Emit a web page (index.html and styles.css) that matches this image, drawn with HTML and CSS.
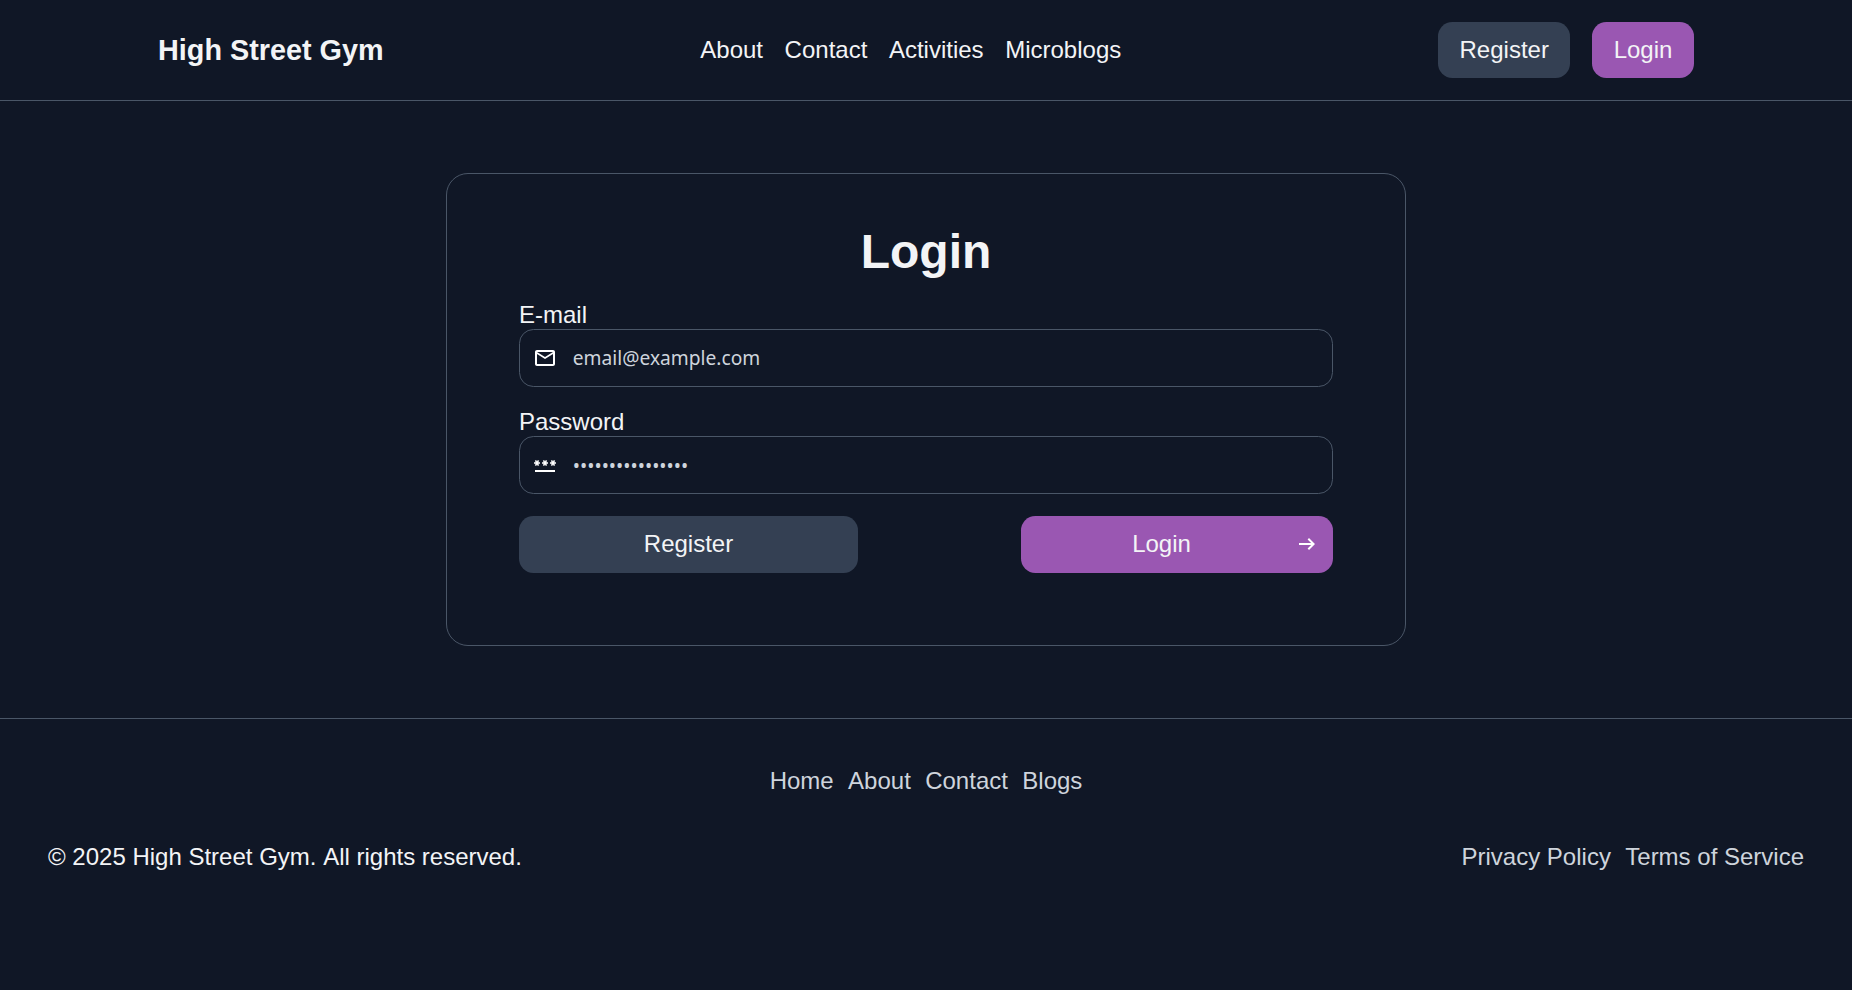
FILE: index.html
```html
<!DOCTYPE html>
<html lang="en">
<head>
<meta charset="utf-8">
<title>High Street Gym</title>
<link rel="stylesheet" href="styles.css">
</head>
<body>
<header class="header">
  <div class="brand">High Street Gym</div>
  <nav class="nav"><a>About</a><a>Contact</a><a>Activities</a><a>Microblogs</a></nav>
  <div class="actions"><a class="button">Register</a><a class="button primary">Login</a></div>
</header>
<main class="main">
  <form class="card">
    <h1 class="title">Login</h1>
    <label class="label" for="email">E-mail</label>
    <div class="field">
      <svg class="icon" viewBox="0 0 24 24"><path d="M22 6c0-1.100-.9-2-2-2H4c-1.100 0-2 .9-2 2v12c0 1.100.9 2 2 2h16c1.100 0 2-.9 2-2V6zm-2 0-8 5-8-5h16zm0 12H4V8l8 5 8-5v10z"/></svg>
      <input class="input email" id="email" type="text" placeholder="email@example.com">
    </div>
    <label class="label" for="password">Password</label>
    <div class="field">
      <svg class="icon" viewBox="0 0 24 24"><path d="M2 17h20v2H2v-2zm1.150-4.050L4 11.470l.85 1.480 1.300-.75-.85-1.480H7v-1.500H5.300l.85-1.470L4.850 7 4 8.470 3.150 7l-1.300.75.85 1.470H1v1.500h1.700l-.85 1.480 1.300.75zm6.700-.75 1.300.75.85-1.480.85 1.480 1.300-.75-.85-1.480H15v-1.500h-1.700l.85-1.470-1.300-.75L12 8.470 11.150 7l-1.300.75.85 1.470H9v1.500h1.700l-.85 1.480zM23 9.220h-1.700l.85-1.470-1.300-.75L20 8.470 19.150 7l-1.300.75.85 1.470H17v1.500h1.700l-.85 1.480 1.300.75.85-1.480.85 1.480 1.300-.75-.85-1.480H23v-1.500z"/></svg>
      <input class="input" id="password" type="password" placeholder="••••••••••••••••">
    </div>
    <div class="row">
      <a class="button register">Register</a>
      <a class="button primary submit"><span class="submit-text">Login</span><svg class="icon arrow" viewBox="0 0 24 24"><path d="m14 18-1.400-1.450L16.150 13H4v-2h12.150L12.600 7.450 14 6l6 6-6 6z"/></svg></a>
    </div>
  </form>
</main>
<footer class="footer">
  <nav class="links"><a>Home</a><a>About</a><a>Contact</a><a>Blogs</a></nav>
  <div class="legal"><span class="copyright">© 2025 High Street Gym. All rights reserved.</span><nav class="links"><a>Privacy Policy</a><a>Terms of Service</a></nav></div>
</footer>
</body>
</html>
```
FILE: styles.css
```css
* { box-sizing: border-box; }
body { margin: 0; min-height: 990px; background: #101726; color: #f3f4f6; font: 24px/28px "Liberation Sans", Arial, sans-serif; }
.header { height: 101px; padding: 0 158px; border-bottom: 1px solid #4a5667; display: flex; justify-content: space-between; align-items: center; }
.brand { font-size: 28.800px; font-weight: bold; }
.nav, .actions { display: flex; gap: 21.600px; }
.button { display: flex; align-items: center; justify-content: center; height: 56px; padding: 0 21.600px; border-radius: 14.400px; background: #344053; }
.primary { background: #9a57b2; }
.main { padding: 72px 0; display: flex; justify-content: center; }
.card { width: 960px; height: 473px; padding: 52px 72px 0; border: 1px solid #4a5667; border-radius: 22px; }
.title { margin: 0 0 25px; font-size: 48px; line-height: 52px; text-align: center; }
.label { display: block; height: 26px; line-height: 23px; }
.field { display: flex; align-items: center; height: 58px; margin-bottom: 23px; padding-left: 13px; gap: 15.800px; border: 1px solid #4a5667; border-radius: 14.400px; }
.icon { width: 24px; height: 24px; fill: #fff; flex: none; }
.arrow { margin-bottom: 1px; }
.input { flex: 1; min-width: 0; padding: 0; border: 0; outline: 0; background: none; color: #f3f4f6; font: 19.200px "Noto Sans", sans-serif; }
.email { padding-bottom: 2px; }
.input::placeholder { color: #ced4dc; opacity: 1; }
.row { display: flex; justify-content: space-between; margin-top: -1px; }
.register { width: 339px; height: 57px; padding-bottom: 2px; }
.submit { width: 312px; height: 57px; padding: 0 14px 0 7px; }
.submit-text { flex: 1; text-align: center; padding-bottom: 2px; }
.footer { border-top: 1px solid #4a5667; padding: 48px 48px 0; }
.links { display: flex; justify-content: center; gap: 14.400px; color: #ced4dc; }
.legal { display: flex; justify-content: space-between; margin-top: 48px; }
.copyright { font-kerning: none; }
```
